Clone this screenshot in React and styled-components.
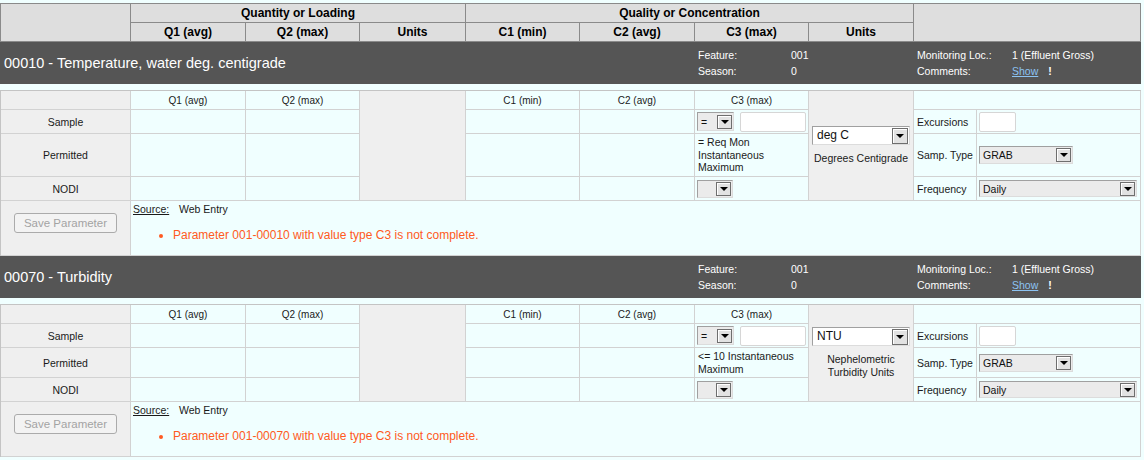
import styled, { createGlobalStyle } from "styled-components";

const COLS = "130px 115px 114px 106px 114px 115px 114px 105px 63px 164px";

const params = [
  {
    code: "00010",
    name: "Temperature, water deg. centigrade",
    unit: "deg C",
    unitName: "Degrees Centigrade",
    permitted: "= Req Mon Instantaneous Maximum",
    permittedHeight: 43,
  },
  {
    code: "00070",
    name: "Turbidity",
    unit: "NTU",
    unitName: "Nephelometric Turbidity Units",
    permitted: "<= 10 Instantaneous Maximum",
    permittedHeight: 30,
  },
];

const GlobalStyle = createGlobalStyle`
  html, body {
    margin: 0;
    padding: 0;
    background: #f0ffff;
  }
  body {
    font-family: "Liberation Sans", Arial, sans-serif;
    color: #111;
  }
`;

const Page = styled.div`
  width: 1141px;
  padding-top: 3px;
`;

/* ---------- top column header ---------- */

const HeadGrid = styled.div`
  display: grid;
  grid-template-columns: ${COLS};
  grid-template-rows: 19px 19px;
  border-top: 1px solid #8a8a8a;
  border-left: 1px solid #8a8a8a;
  background: #dedede;
`;

const HeadCell = styled.div`
  grid-column: ${(p) => p.$col};
  grid-row: ${(p) => p.$row};
  border-right: 1px solid #8a8a8a;
  border-bottom: 1px solid #8a8a8a;
  display: flex;
  align-items: center;
  justify-content: center;
  font-size: 12px;
  font-weight: bold;
  color: #000;
`;

/* ---------- dark parameter band ---------- */

const Band = styled.div`
  display: grid;
  grid-template-columns: ${COLS};
  height: 42px;
  padding-left: 1px;
  background: #555555;
  color: #fff;
  align-items: center;
`;

const BandTitle = styled.div`
  grid-column: 1 / 7;
  padding-left: 3px;
  font-size: 14.5px;
  white-space: nowrap;
`;

const Meta = styled.div`
  grid-column: ${(p) => p.$col};
  display: grid;
  grid-template-columns: ${(p) => p.$label}px 1fr;
  padding-left: 3px;
  font-size: 10.5px;
  line-height: 16px;
  white-space: nowrap;
`;

const ShowWrap = styled.span`
  display: flex;
  gap: 10px;
`;

const ShowLink = styled.a`
  color: #8cc3f2;
  text-decoration: underline;
`;

const Bang = styled.span`
  font-weight: bold;
`;

const Spacer = styled.div`
  height: 6px;
`;

/* ---------- parameter body ---------- */

const BodyGrid = styled.div`
  display: grid;
  grid-template-columns: ${COLS};
  grid-template-rows: ${(p) => p.$rows};
  border-top: 1px solid #c4c4c4;
  border-left: 1px solid #c4c4c4;
`;

const Cell = styled.div`
  grid-column: ${(p) => p.$col};
  grid-row: ${(p) => p.$row};
  background: ${(p) => (p.$gray ? "#efefef" : "#f0ffff")};
  border-right: 1px solid #d2d2d2;
  border-bottom: 1px solid #d2d2d2;
  display: flex;
  align-items: center;
  justify-content: ${(p) => (p.$left ? "flex-start" : "center")};
  padding: 0 ${(p) => (p.$pad ?? 3)}px;
  font-size: 10.5px;
  color: #1a1a1a;
  min-width: 0;
`;

const ColLabel = styled(Cell)`
  font-size: 10px;
`;

const UnitsCell = styled(Cell)`
  flex-direction: column;
  padding: 0 2px;
  text-align: center;
  line-height: 13px;
`;

const UnitName = styled.div`
  margin-top: 7px;
  padding: 0 3px;
`;

const NoteCell = styled(Cell)`
  align-items: flex-start;
  padding: 2px 3px 0;
  line-height: 12.5px;
`;

const ButtonCell = styled(Cell)`
  align-items: flex-start;
  padding-top: 12px;
`;

const SaveButton = styled.button`
  width: 103px;
  height: 20px;
  border: 1px solid #ababab;
  border-radius: 3px;
  background: #f3f3f3;
  color: #a3a3a3;
  font-family: inherit;
  font-size: 11.5px;
  padding: 0;
`;

const SourceCell = styled(Cell)`
  flex-direction: column;
  align-items: stretch;
  justify-content: flex-start;
  padding: 2px 2px 0;
`;

const SourceLine = styled.div`
  display: flex;
  line-height: 13px;
`;

const SourceLabel = styled.span`
  width: 46px;
  text-decoration: underline;
`;

const Issues = styled.ul`
  margin: 12px 0 0;
  padding-left: 40px;
  color: #ff5a22;
  font-size: 12px;
  line-height: 14px;
`;

/* ---------- form controls ---------- */

const Select = styled.div`
  box-sizing: border-box;
  width: ${(p) => p.$w}px;
  height: ${(p) => p.$h}px;
  display: flex;
  align-items: center;
  text-align: left;
  padding-left: ${(p) => (p.$big ? 4 : 3)}px;
  background: ${(p) => (p.$white ? "#fff" : "#ebebeb")};
  border: 1px solid #dcdcdc;
  border-top-color: #a0a0a0;
  border-left-color: #a0a0a0;
  font-size: ${(p) => (p.$big ? 12 : 10.5)}px;
  color: #111;
`;

const SelectValue = styled.span`
  flex: 1;
  white-space: nowrap;
`;

const Arrow = styled.span`
  box-sizing: border-box;
  width: ${(p) => (p.$big ? 16 : 15)}px;
  height: ${(p) => (p.$big ? 16 : 14)}px;
  margin-right: 1px;
  border: 1px solid #6e6e6e;
  box-shadow: inset 1px 1px 0 #fff;
  background: #e2e2e2;
  display: flex;
  align-items: center;
  justify-content: center;

  &::after {
    content: "";
    border-left: 4px solid transparent;
    border-right: 4px solid transparent;
    border-top: 4px solid #000;
  }
`;

const TextBox = styled.div`
  box-sizing: border-box;
  width: ${(p) => p.$w}px;
  height: 20px;
  background: #fff;
  border: 1px solid #d6d6d6;
  border-radius: 2px;
`;

const Inline = styled.div`
  display: flex;
  align-items: center;
  gap: 6px;
`;

const Dropdown = ({ value, w, h, big, white }) => (
  <Select $w={w} $h={h} $big={big} $white={white}>
    <SelectValue>{value}</SelectValue>
    <Arrow $big={big} />
  </Select>
);

const ParameterBlock = ({ p }) => {
  const rows = `19px 24px ${p.permittedHeight}px 24px 55px`;
  return (
    <>
      <Band>
        <BandTitle>
          {p.code} - {p.name}
        </BandTitle>
        <Meta $col="7 / 9" $label={93}>
          <span>Feature:</span>
          <span>001</span>
          <span>Season:</span>
          <span>0</span>
        </Meta>
        <Meta $col="9 / 11" $label={95}>
          <span>Monitoring Loc.:</span>
          <span>1 (Effluent Gross)</span>
          <span>Comments:</span>
          <ShowWrap>
            <ShowLink href="#">Show</ShowLink>
            <Bang>!</Bang>
          </ShowWrap>
        </Meta>
      </Band>
      <Spacer />
      <BodyGrid $rows={rows}>
        <Cell $col="1" $row="1" $gray />
        <ColLabel $col="2" $row="1">Q1 (avg)</ColLabel>
        <ColLabel $col="3" $row="1">Q2 (max)</ColLabel>
        <Cell $col="4" $row="1 / 5" $gray />
        <ColLabel $col="5" $row="1">C1 (min)</ColLabel>
        <ColLabel $col="6" $row="1">C2 (avg)</ColLabel>
        <ColLabel $col="7" $row="1">C3 (max)</ColLabel>
        <UnitsCell $col="8" $row="1 / 5" $gray>
          <Dropdown value={p.unit} w={98} h={19} big white />
          <UnitName>{p.unitName}</UnitName>
        </UnitsCell>
        <Cell $col="9 / 11" $row="1" />

        <Cell $col="1" $row="2" $gray>Sample</Cell>
        <Cell $col="2" $row="2" />
        <Cell $col="3" $row="2" />
        <Cell $col="5" $row="2" />
        <Cell $col="6" $row="2" />
        <Cell $col="7" $row="2" $left $pad={2}>
          <Inline>
            <Dropdown value="=" w={37} h={19} />
            <TextBox $w={66} />
          </Inline>
        </Cell>
        <Cell $col="9" $row="2" $left>Excursions</Cell>
        <Cell $col="10" $row="2" $left $pad={2}>
          <TextBox $w={37} />
        </Cell>

        <Cell $col="1" $row="3" $gray>Permitted</Cell>
        <Cell $col="2" $row="3" />
        <Cell $col="3" $row="3" />
        <Cell $col="5" $row="3" />
        <Cell $col="6" $row="3" />
        <NoteCell $col="7" $row="3" $left>{p.permitted}</NoteCell>
        <Cell $col="9" $row="3" $left>Samp. Type</Cell>
        <Cell $col="10" $row="3" $left $pad={2}>
          <Dropdown value="GRAB" w={94} h={18} />
        </Cell>

        <Cell $col="1" $row="4" $gray>NODI</Cell>
        <Cell $col="2" $row="4" />
        <Cell $col="3" $row="4" />
        <Cell $col="5" $row="4" />
        <Cell $col="6" $row="4" />
        <Cell $col="7" $row="4" $left $pad={2}>
          <Dropdown value="" w={36} h={18} />
        </Cell>
        <Cell $col="9" $row="4" $left>Frequency</Cell>
        <Cell $col="10" $row="4" $left $pad={2}>
          <Dropdown value="Daily" w={158} h={17} />
        </Cell>

        <ButtonCell $col="1" $row="5" $gray>
          <SaveButton disabled>Save Parameter</SaveButton>
        </ButtonCell>
        <SourceCell $col="2 / 11" $row="5">
          <SourceLine>
            <SourceLabel>Source:</SourceLabel>
            <span>Web Entry</span>
          </SourceLine>
          <Issues>
            <li>Parameter 001-{p.code} with value type C3 is not complete.</li>
          </Issues>
        </SourceCell>
      </BodyGrid>
    </>
  );
};

export default function App() {
  return (
    <>
      <GlobalStyle />
      <Page>
        <HeadGrid>
          <HeadCell $col="1" $row="1 / 3" />
          <HeadCell $col="2 / 5" $row="1">Quantity or Loading</HeadCell>
          <HeadCell $col="5 / 9" $row="1">Quality or Concentration</HeadCell>
          <HeadCell $col="9 / 11" $row="1 / 3" />
          <HeadCell $col="2" $row="2">Q1 (avg)</HeadCell>
          <HeadCell $col="3" $row="2">Q2 (max)</HeadCell>
          <HeadCell $col="4" $row="2">Units</HeadCell>
          <HeadCell $col="5" $row="2">C1 (min)</HeadCell>
          <HeadCell $col="6" $row="2">C2 (avg)</HeadCell>
          <HeadCell $col="7" $row="2">C3 (max)</HeadCell>
          <HeadCell $col="8" $row="2">Units</HeadCell>
        </HeadGrid>
        {params.map((p) => (
          <ParameterBlock key={p.code} p={p} />
        ))}
      </Page>
    </>
  );
}
